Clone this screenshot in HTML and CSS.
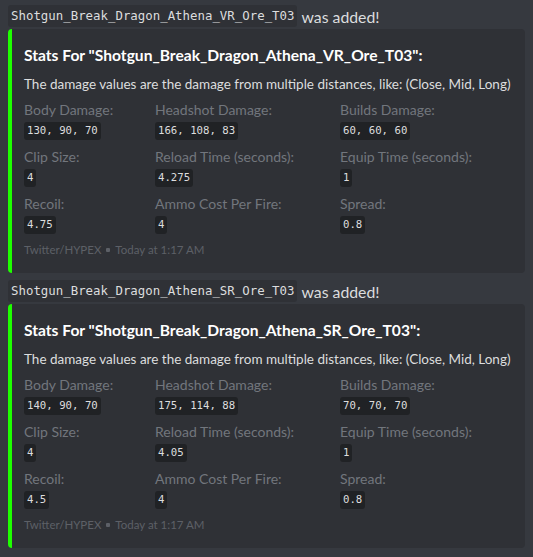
FILE: index.html
```html
<!DOCTYPE html>
<html lang="en">

<head>
    <meta charset="UTF-8">
    <meta name="viewport" content="width=device-width, initial-scale=1.0">
    <title>Weapon Stats</title>
    <link rel="stylesheet" href="styles.css">
</head>

<body>
    <main class="chat">
        <!-- VR variant -->
        <div class="message">
            <div class="message-line"><code class="inline-code">Shotgun_Break_Dragon_Athena_VR_Ore_T03</code> was added!</div>
            <div class="embed">
                <div class="embed-title">Stats For "Shotgun_Break_Dragon_Athena_VR_Ore_T03":</div>
                <div class="embed-desc">The damage values are the damage from multiple distances, like: (Close, Mid, Long)</div>
                <div class="embed-fields">
                    <div class="field">
                        <div class="field-name">Body Damage:</div>
                        <div class="field-value"><code>130, 90, 70</code></div>
                    </div>
                    <div class="field">
                        <div class="field-name">Headshot Damage:</div>
                        <div class="field-value"><code>166, 108, 83</code></div>
                    </div>
                    <div class="field">
                        <div class="field-name">Builds Damage:</div>
                        <div class="field-value"><code>60, 60, 60</code></div>
                    </div>
                    <div class="field">
                        <div class="field-name">Clip Size:</div>
                        <div class="field-value"><code>4</code></div>
                    </div>
                    <div class="field">
                        <div class="field-name">Reload Time (seconds):</div>
                        <div class="field-value"><code>4.275</code></div>
                    </div>
                    <div class="field">
                        <div class="field-name">Equip Time (seconds):</div>
                        <div class="field-value"><code>1</code></div>
                    </div>
                    <div class="field">
                        <div class="field-name">Recoil:</div>
                        <div class="field-value"><code>4.75</code></div>
                    </div>
                    <div class="field">
                        <div class="field-name">Ammo Cost Per Fire:</div>
                        <div class="field-value"><code>4</code></div>
                    </div>
                    <div class="field">
                        <div class="field-name">Spread:</div>
                        <div class="field-value"><code>0.8</code></div>
                    </div>
                </div>
                <div class="embed-footer">Twitter/HYPEX<span class="footer-sep"></span>Today at 1:17 AM</div>
            </div>
        </div>

        <!-- SR variant -->
        <div class="message">
            <div class="message-line"><code class="inline-code">Shotgun_Break_Dragon_Athena_SR_Ore_T03</code> was added!</div>
            <div class="embed">
                <div class="embed-title">Stats For "Shotgun_Break_Dragon_Athena_SR_Ore_T03":</div>
                <div class="embed-desc">The damage values are the damage from multiple distances, like: (Close, Mid, Long)</div>
                <div class="embed-fields">
                    <div class="field">
                        <div class="field-name">Body Damage:</div>
                        <div class="field-value"><code>140, 90, 70</code></div>
                    </div>
                    <div class="field">
                        <div class="field-name">Headshot Damage:</div>
                        <div class="field-value"><code>175, 114, 88</code></div>
                    </div>
                    <div class="field">
                        <div class="field-name">Builds Damage:</div>
                        <div class="field-value"><code>70, 70, 70</code></div>
                    </div>
                    <div class="field">
                        <div class="field-name">Clip Size:</div>
                        <div class="field-value"><code>4</code></div>
                    </div>
                    <div class="field">
                        <div class="field-name">Reload Time (seconds):</div>
                        <div class="field-value"><code>4.05</code></div>
                    </div>
                    <div class="field">
                        <div class="field-name">Equip Time (seconds):</div>
                        <div class="field-value"><code>1</code></div>
                    </div>
                    <div class="field">
                        <div class="field-name">Recoil:</div>
                        <div class="field-value"><code>4.5</code></div>
                    </div>
                    <div class="field">
                        <div class="field-name">Ammo Cost Per Fire:</div>
                        <div class="field-value"><code>4</code></div>
                    </div>
                    <div class="field">
                        <div class="field-name">Spread:</div>
                        <div class="field-value"><code>0.8</code></div>
                    </div>
                </div>
                <div class="embed-footer">Twitter/HYPEX<span class="footer-sep"></span>Today at 1:17 AM</div>
            </div>
        </div>
    </main>
</body>

</html>
```

FILE: styles.css
```css
:root {
    --chat-bg: #36393f;
    --embed-bg: #2f3136;
    --code-bg: #202225;
    --accent: #1eff00;
    --title-text: #ffffff;
    --normal-text: #dcddde;
    --muted-text: #72767d;
    --footer-text: #5d6067;
}

body {
    margin: 0;
    background-color: var(--chat-bg);
    color: var(--normal-text);
    font-family: Lato, "Noto Sans", sans-serif;
}

.chat {
    padding: 5px 8px 0 8px;
}

.message {
    margin-bottom: 7px;
}

.message-line {
    display: flex;
    align-items: center;
    height: 22px;
    font-size: 15.8px;
}

.inline-code {
    display: inline-block;
    height: 22px;
    line-height: 22px;
    padding: 0 3px;
    margin-right: 4px;
    background-color: var(--embed-bg);
    border-radius: 3px;
    font-family: "DejaVu Sans Mono", monospace;
    font-size: 12.4px;
    color: var(--normal-text);
}

.embed {
    margin-top: 2px;
    background-color: var(--embed-bg);
    border-left: 4px solid var(--accent);
    border-radius: 4px;
    padding: 16px 16px 15px 12px;
}

.embed-title {
    font-size: 15.6px;
    font-weight: 700;
    line-height: 20px;
    color: var(--title-text);
}

.embed-desc {
    margin-top: 10px;
    font-size: 13.5px;
    line-height: 18px;
    white-space: nowrap;
}

.embed-fields {
    margin-top: 8px;
    display: grid;
    grid-template-columns: 131px 185px 1fr;
    row-gap: 8px;
}

.field-name {
    font-size: 14px;
    line-height: 18px;
    color: var(--muted-text);
}

.field-value {
    display: flex;
    margin-top: 3px;
    height: 18px;
}

.field-value code {
    height: 18px;
    line-height: 18px;
    padding: 0 3px;
    background-color: var(--code-bg);
    border-radius: 3px;
    font-family: "DejaVu Sans Mono", monospace;
    font-size: 10.7px;
    color: var(--normal-text);
}

.embed-footer {
    margin-top: 8px;
    display: flex;
    align-items: center;
    font-size: 11.5px;
    line-height: 16px;
    color: var(--footer-text);
}

.footer-sep {
    width: 4px;
    height: 4px;
    margin: 0 5px;
    background-color: var(--footer-text);
    border-radius: 1px;
}
```
